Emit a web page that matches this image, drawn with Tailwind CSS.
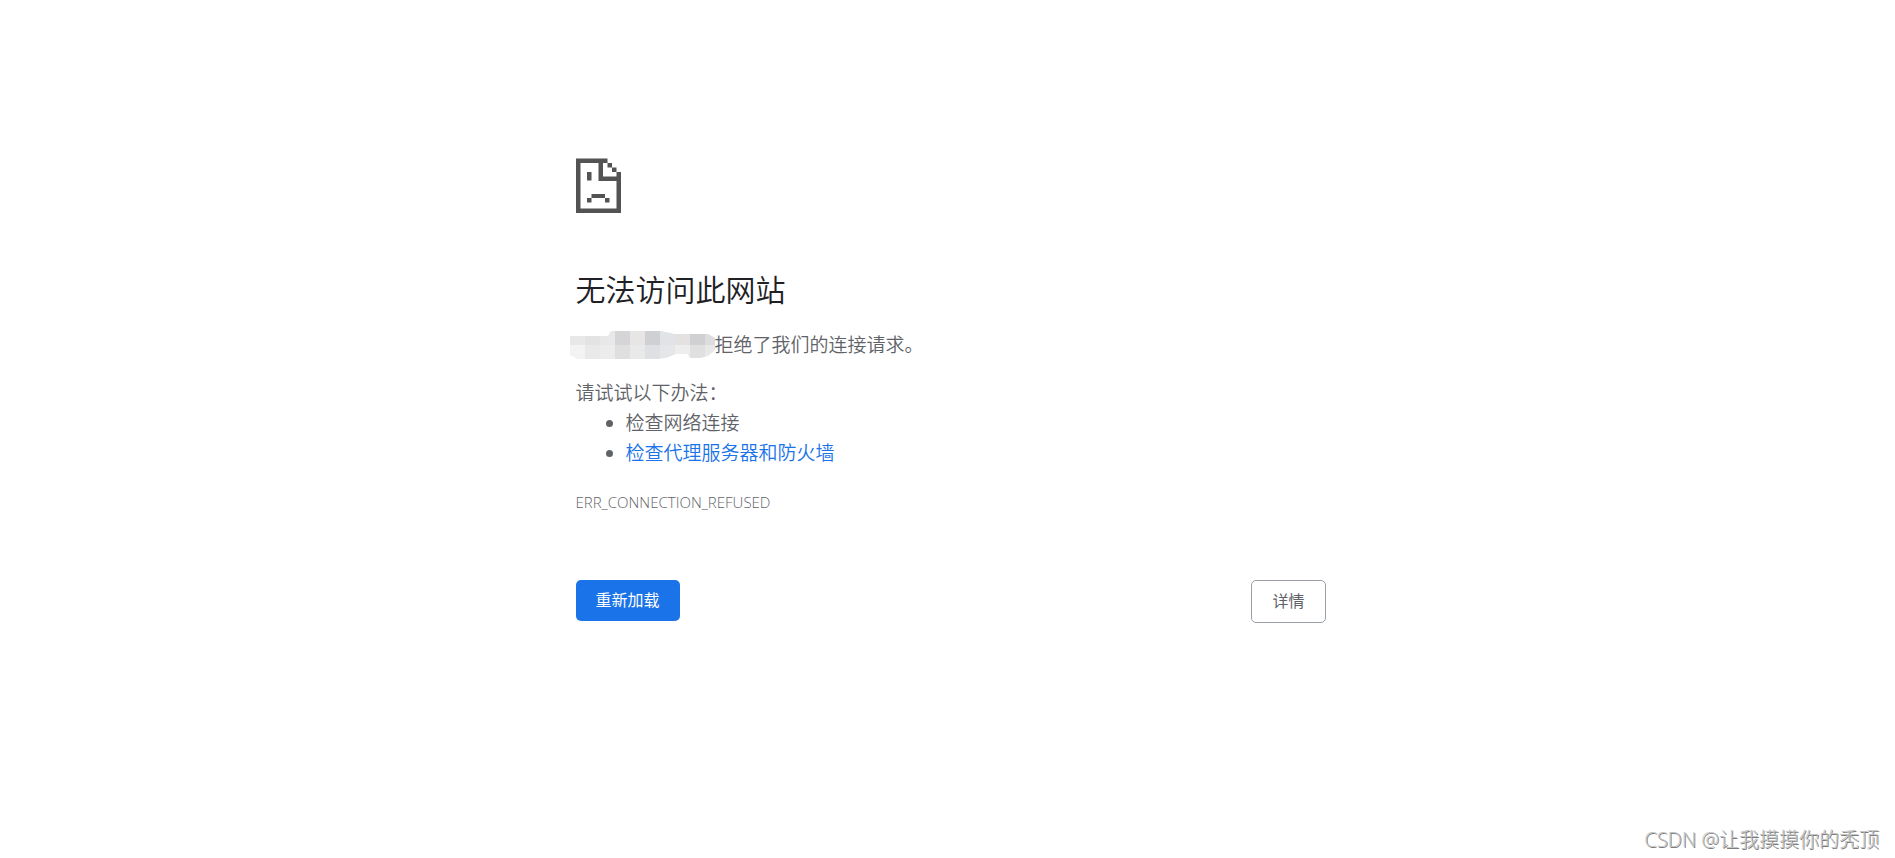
<!DOCTYPE html>
<html lang="zh-CN">
<head>
  <meta charset="UTF-8" />
  <meta name="viewport" content="width=device-width, initial-scale=1" />
  <title>无法访问此网站</title>
  <script src="https://cdn.jsdelivr.net/npm/@tailwindcss/browser@4"></script>
  <style>
    body {
      font-family: 'Open Sans', 'Noto Sans CJK SC', sans-serif;
    }
    .watermark {
      color: #c4c4c4;
      text-shadow: 1px 1px 0 #7d7d7d;
    }
  </style>
</head>
<body class="min-h-screen bg-white text-[#5f6368] relative">

  <main class="mx-auto w-full max-w-[756px] pt-[158px] pl-1.5">
    <!-- Sad page icon -->
    <svg class="w-[46px] h-[55px]" viewBox="0 0 46 55" fill="#535353" aria-hidden="true">
      <path d="M0 0.5H31.5V5H4.5V50.5H40.5V23H22.5V5H27V18.5H40.5V14H45V55H0Z" />
      <path d="M31.5 5h4.5v4.5h-4.5zM36 9.5h4.5v4.5h-4.5zM11 14h4.5v8.5h-4.5zM15.5 36h13.5v4h-13.5zM11 40h4.5v4.5h-4.5zM29 40h4.5v4.5h-4.5z" />
    </svg>

    <h1 class="mt-[53px] text-[30px] leading-[48px] font-[350] text-[#202124]">无法访问此网站</h1>

    <div class="mt-4 text-[19px] leading-[30px] font-[350]">
      <p class="flex items-center">
        <!-- Blurred host name -->
        <svg class="-ml-1.5 w-[145px] h-[30px]" viewBox="0 0 145 30" shape-rendering="crispEdges" aria-hidden="true">
          <clipPath id="blob">
            <path d="M0 6H38L41 1H91L105 4H138L145 8V20L138 26L130 28H120L117 24H106L96 28L88 29H7L0 25Z" />
          </clipPath>
          <g clip-path="url(#blob)">
            <path fill="#e8e8e8" d="M0 0h15v15H0z" />
            <path fill="#e3e3e4" d="M15 0h15v15H15z" />
            <path fill="#e8e8e8" d="M30 0h15v15H30z" />
            <path fill="#d5d5d8" d="M45 0h15v15H45z" />
            <path fill="#e7e6e4" d="M60 0h15v15H60z" />
            <path fill="#cfd0d4" d="M75 0h15v15H75z" />
            <path fill="#e2e3e6" d="M90 0h15v15H90z" />
            <path fill="#e4e2e0" d="M105 0h15v15H105z" />
            <path fill="#d0d0d3" d="M120 0h15v15H120z" />
            <path fill="#dddddf" d="M135 0h10v15H135z" />
            <path fill="#f3f3f3" d="M0 15h15v15H0z" />
            <path fill="#e9e9e9" d="M15 15h15v15H15z" />
            <path fill="#ececec" d="M30 15h15v15H30z" />
            <path fill="#dfdfe0" d="M45 15h15v15H45z" />
            <path fill="#e9e9e9" d="M60 15h15v15H60z" />
            <path fill="#dfe0e3" d="M75 15h15v15H75z" />
            <path fill="#e5e6e7" d="M90 15h15v15H90z" />
            <path fill="#ededed" d="M105 15h15v15H105z" />
            <path fill="#e0e0e0" d="M120 15h15v15H120z" />
            <path fill="#e8e8e8" d="M135 15h10v15H135z" />
          </g>
        </svg>
        <span>拒绝了我们的连接请求。</span>
      </p>
      <p class="mt-[18px]">请试试以下办法：</p>
      <ul class="list-disc pl-[50px]">
        <li>检查网络连接</li>
        <li><a href="#buttons" class="text-[#1a73e8]">检查代理服务器和防火墙</a></li>
      </ul>
    </div>

    <p class="mt-5 text-[15px] leading-[28px] font-light">ERR_CONNECTION_REFUSED</p>

    <div id="buttons" class="mt-16 flex items-start justify-between text-[16px] leading-[41px]">
      <button type="button" class="rounded-[5px] bg-[#1a73e8] px-5 text-white">重新加载</button>
      <button type="button" class="rounded-[5px] border border-[#9aa0a6] px-5">详情</button>
    </div>
  </main>

  <div class="watermark absolute right-4 bottom-1 text-[20px] leading-[28px] font-light">CSDN @让我摸摸你的秃顶</div>

</body>
</html>
